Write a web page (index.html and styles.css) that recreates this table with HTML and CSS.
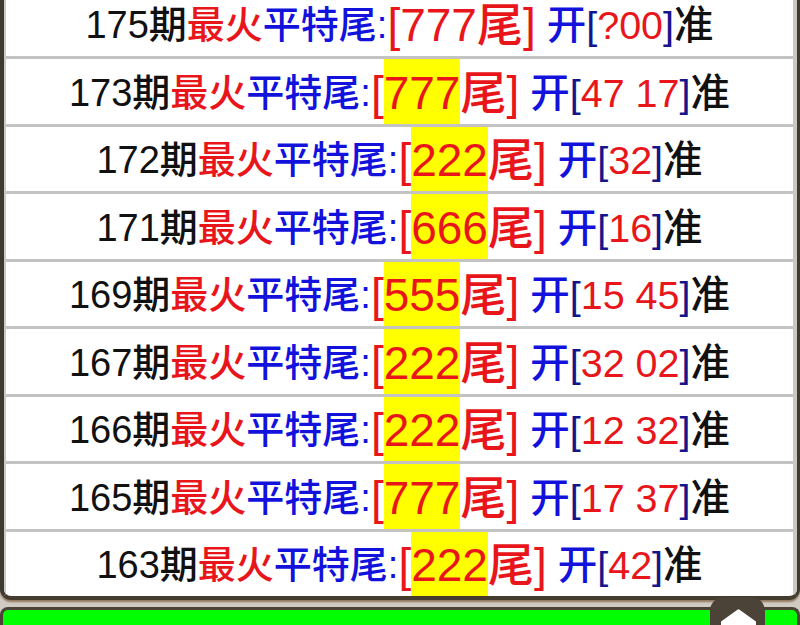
FILE: index.html
```html
<!DOCTYPE html>
<html lang="zh">
<head>
<meta charset="utf-8">
<title>最火平特尾</title>
<link rel="stylesheet" href="styles.css">
</head>
<body>
<div class="page">
  <div class="panel">
    <div class="inner">
      <div class="row"><span class="k">175期</span><span class="r">最火</span><span class="b">平特尾:</span><span class="big">[<span class="num">777</span>尾]</span><span class="b t"> 开</span><span class="n t">[</span><span class="r t">?00</span><span class="n t">]</span><span class="k t">准</span></div>
      <div class="row"><span class="k">173期</span><span class="r">最火</span><span class="b">平特尾:</span><span class="big">[<span class="num hl">777</span>尾]</span><span class="b t"> 开</span><span class="n t">[</span><span class="r t">47 17</span><span class="n t">]</span><span class="k t">准</span></div>
      <div class="row"><span class="k">172期</span><span class="r">最火</span><span class="b">平特尾:</span><span class="big">[<span class="num hl">222</span>尾]</span><span class="b t"> 开</span><span class="n t">[</span><span class="r t">32</span><span class="n t">]</span><span class="k t">准</span></div>
      <div class="row"><span class="k">171期</span><span class="r">最火</span><span class="b">平特尾:</span><span class="big">[<span class="num hl">666</span>尾]</span><span class="b t"> 开</span><span class="n t">[</span><span class="r t">16</span><span class="n t">]</span><span class="k t">准</span></div>
      <div class="row"><span class="k">169期</span><span class="r">最火</span><span class="b">平特尾:</span><span class="big">[<span class="num hl">555</span>尾]</span><span class="b t"> 开</span><span class="n t">[</span><span class="r t">15 45</span><span class="n t">]</span><span class="k t">准</span></div>
      <div class="row"><span class="k">167期</span><span class="r">最火</span><span class="b">平特尾:</span><span class="big">[<span class="num hl">222</span>尾]</span><span class="b t"> 开</span><span class="n t">[</span><span class="r t">32 02</span><span class="n t">]</span><span class="k t">准</span></div>
      <div class="row"><span class="k">166期</span><span class="r">最火</span><span class="b">平特尾:</span><span class="big">[<span class="num hl">222</span>尾]</span><span class="b t"> 开</span><span class="n t">[</span><span class="r t">12 32</span><span class="n t">]</span><span class="k t">准</span></div>
      <div class="row"><span class="k">165期</span><span class="r">最火</span><span class="b">平特尾:</span><span class="big">[<span class="num hl">777</span>尾]</span><span class="b t"> 开</span><span class="n t">[</span><span class="r t">17 37</span><span class="n t">]</span><span class="k t">准</span></div>
      <div class="row"><span class="k">163期</span><span class="r">最火</span><span class="b">平特尾:</span><span class="big">[<span class="num hl">222</span>尾]</span><span class="b t"> 开</span><span class="n t">[</span><span class="r t">42</span><span class="n t">]</span><span class="k t">准</span></div>
    </div>
  </div>
  <div class="greenbar"></div>
  <div class="totop">
    <svg width="55" height="28" viewBox="0 0 55 28"><path d="M28 13.5 Q28.5 13 29 13.5 L45 25 L45 30 L12 30 L12 25 Z" fill="#ffffff" stroke="#ffffff" stroke-width="2" stroke-linejoin="round"/></svg>
  </div>
</div>
</body>
</html>
```
FILE: styles.css
```css
html, body {
  margin: 0;
  padding: 0;
  background: #d0cbc3;
  overflow: hidden;
}
.page {
  position: relative;
  width: 800px;
  height: 625px;
  overflow: hidden;
}
.panel {
  margin-top: -8.5px;
  border-left: 4px solid #3d3a32;
  border-right: 3px solid #3d3a32;
  border-bottom: 4px solid #453c30;
  border-radius: 0 0 11px 11px;
  background: #ffffff;
  box-shadow: 0 2px 2px rgba(120, 85, 50, 0.7);
  overflow: hidden;
}
.inner {
  border-left: 2px solid #cac8c0;
  border-right: 4px solid #cac8c0;
}
.row {
  display: flex;
  justify-content: center;
  height: 62px;
  padding-top: 2.5px;
  line-height: 62px;
  border-bottom: 3px solid #c3c3c3;
  font-family: "Liberation Sans", "Noto Sans CJK SC", sans-serif;
  font-size: 38px;
  font-weight: 500;
  white-space: pre;
  color: #111111;
}
.row:last-child {
  border-bottom: none;
}
.k { color: #111111; }
.r { color: #e8161b; }
.b { color: #1212dc; }
.n { color: #14148c; }
.t { font-size: 39.5px; }
.big {
  display: flex;
  font-size: 46px;
  color: #e8161b;
}
.num { display: block; }
.hl {
  background: #ffff00;
  margin-top: -2.5px;
  padding-top: 2.5px;
}
.greenbar {
  margin-top: 7px;
  height: 20px;
  border: 3px solid #4a4336;
  border-bottom: none;
  border-radius: 8px 8px 0 0;
  background: #00ff00;
}
.totop {
  position: absolute;
  left: 710px;
  top: 597px;
  width: 55px;
  height: 28px;
  background: #4b4337;
  border-radius: 14px 14px 0 0;
}
.totop svg { display: block; }
```
